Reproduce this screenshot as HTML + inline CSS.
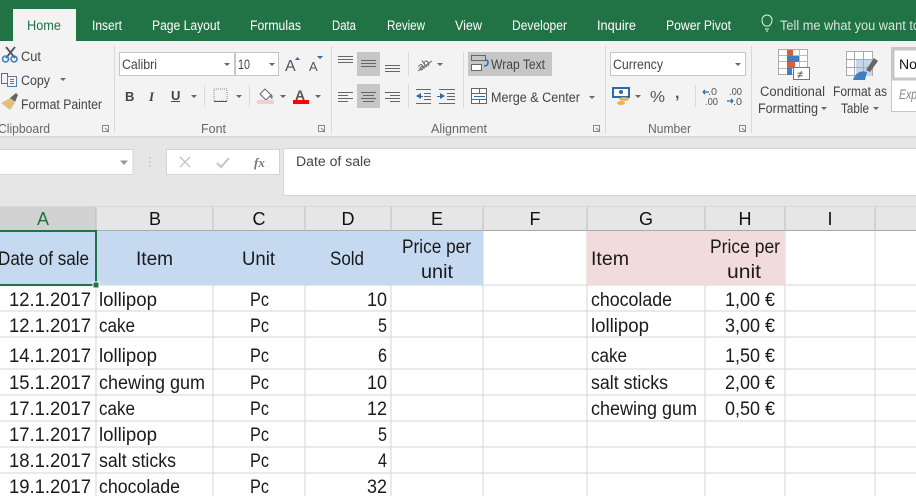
<!DOCTYPE html>
<html><head><meta charset="utf-8"><style>
html,body{margin:0;padding:0;width:916px;height:496px;overflow:hidden;background:#fff}
svg{display:block;font-family:"Liberation Sans",sans-serif}
.t{font-size:13.5px;fill:#fff}
.r{font-size:13.5px;fill:#444}
.g{font-size:13px;fill:#666}
.h{font-size:18px;fill:#111;text-anchor:middle}
.c{font-size:19px;fill:#1a1a1a}
</style></head><body>
<svg width="916" height="496" viewBox="0 0 916 496" xmlns="http://www.w3.org/2000/svg">
<rect width="916" height="41" fill="#217346"/>
<rect x="13" y="9" width="63" height="33" fill="#f3f3f3"/>
<rect y="41" width="916" height="96" fill="#f3f3f3"/>
<rect y="137" width="916" height="70" fill="#e6e6e6"/>
<rect y="136" width="916" height="2" fill="#d8d8d8"/>
<text class="t" x="27" y="30" textLength="34" lengthAdjust="spacingAndGlyphs" style="fill:#217346">Home</text>
<text class="t" x="92" y="30" textLength="30" lengthAdjust="spacingAndGlyphs">Insert</text>
<text class="t" x="152" y="30" textLength="68" lengthAdjust="spacingAndGlyphs">Page Layout</text>
<text class="t" x="250" y="30" textLength="51" lengthAdjust="spacingAndGlyphs">Formulas</text>
<text class="t" x="332" y="30" textLength="24" lengthAdjust="spacingAndGlyphs">Data</text>
<text class="t" x="387" y="30" textLength="38" lengthAdjust="spacingAndGlyphs">Review</text>
<text class="t" x="455" y="30" textLength="27" lengthAdjust="spacingAndGlyphs">View</text>
<text class="t" x="512" y="30" textLength="55" lengthAdjust="spacingAndGlyphs">Developer</text>
<text class="t" x="597" y="30" textLength="39" lengthAdjust="spacingAndGlyphs">Inquire</text>
<text class="t" x="666" y="30" textLength="65" lengthAdjust="spacingAndGlyphs">Power Pivot</text>
<text class="t" x="780" y="30" textLength="140" lengthAdjust="spacingAndGlyphs" style="fill:#d5e6dc">Tell me what you want to</text>
<g fill="none" stroke="#e8f0eb" stroke-width="1"><path d="M765 26c-2-2-3-3-3-6a5 5 0 0 1 10 0c0 3-1 4-3 6z"/><path d="M765 29h4M766 31h2"/></g>

<g fill="#d8d8d8"><rect x="114" y="46" width="1" height="87"/><rect x="331" y="46" width="1" height="87"/><rect x="605" y="46" width="1" height="87"/><rect x="751" y="46" width="1" height="87"/><rect x="408" y="52" width="1" height="24"/><rect x="408" y="84" width="1" height="24"/><rect x="463" y="52" width="1" height="56"/><rect x="204" y="85" width="1" height="22"/><rect x="249" y="85" width="1" height="22"/><rect x="695" y="85" width="1" height="22"/></g>

<!-- clipboard -->
<g fill="none" stroke="#555" stroke-width="1.8"><path d="M6 47l9 11M15 47l-9 11"/></g>
<g fill="none" stroke="#3f7fc0" stroke-width="1.6"><circle cx="5.500" cy="59" r="3"/><circle cx="14" cy="59" r="3"/></g>
<g fill="none" stroke="#666" stroke-width="1"><path d="M1.500 73.500h6v10h-6z"/><rect x="7.500" y="76.500" width="9" height="10" fill="#f3f3f3" stroke="#5a7fa5"/><path d="M10 79.500h4M10 81.500h4M10 83.500h4" stroke="#5a7fa5"/></g>
<path d="M1 103l9-5 5 5-5 7z" fill="#e3bf7e"/><path d="M10 98l6-5 2 2-3 7z" fill="#666"/>
<text class="r" x="21" y="61" textLength="20" lengthAdjust="spacingAndGlyphs">Cut</text>
<text class="r" x="21" y="85" textLength="29" lengthAdjust="spacingAndGlyphs">Copy</text>
<path d="M60 78h6l-3 3z" fill="#666"/>
<text class="r" x="21" y="109" textLength="81" lengthAdjust="spacingAndGlyphs">Format Painter</text>
<text class="g" x="-2" y="133" textLength="52" lengthAdjust="spacingAndGlyphs">Clipboard</text>
<path d="M102.500 125.500h6v6h-6zM105 128l4 4" fill="none" stroke="#888"/>

<!-- font -->
<rect x="119.500" y="52.500" width="115" height="23" fill="#fff" stroke="#c6c6c6"/>
<rect x="235.500" y="52.500" width="43" height="23" fill="#fff" stroke="#c6c6c6"/>
<text class="r" x="122" y="69" textLength="35" lengthAdjust="spacingAndGlyphs">Calibri</text>
<text class="r" x="238" y="69" textLength="12" lengthAdjust="spacingAndGlyphs">10</text>
<path d="M224 63h6l-3 3zM269 63h6l-3 3z" fill="#666"/>
<text x="285" y="71" style="font-size:16px;fill:#555">A</text><path d="M295 60h5l-2.500-3z" fill="#2b6ca8"/>
<text x="309" y="71" style="font-size:13px;fill:#555">A</text><path d="M317 56h6l-3 3z" fill="#2b6ca8"/>
<text x="125" y="101" style="font-size:13px;font-weight:bold;fill:#444">B</text>
<text x="149" y="101" style="font-size:13px;font-style:italic;font-family:'Liberation Serif',serif;font-weight:bold;fill:#444">I</text>
<text x="171" y="100" style="font-size:13px;font-weight:bold;fill:#444">U</text><rect x="171" y="101" width="9" height="1" fill="#444"/>
<path d="M191 95h6l-3 3zM236 95h6l-3 3zM280 95h6l-3 3zM315 95h6l-3 3z" fill="#666"/>
<rect x="214" y="89" width="13" height="12" fill="none" stroke="#888" stroke-dasharray="1 1"/><rect x="214" y="101" width="13" height="1" fill="#555"/>
<path d="M260 94l5-5 6 6-5 5z" fill="#fff" stroke="#666"/><path d="M271 94c2 1 2 4 1 5-2-1-2-3-1-5z" fill="#3f7fc0"/><rect x="257" y="100" width="17" height="4" fill="#f2d0ce"/>
<text x="295" y="100" style="font-size:14px;font-weight:bold;fill:#555">A</text><rect x="293" y="100" width="16" height="4" fill="#f00"/>
<text class="g" x="201" y="133" textLength="25" lengthAdjust="spacingAndGlyphs">Font</text>
<path d="M318.500 125.500h6v6h-6zM321 128l4 4" fill="none" stroke="#888"/>

<!-- alignment -->
<rect x="357" y="52" width="23" height="24" fill="#c6c6c6"/>
<rect x="357" y="84" width="23" height="24" fill="#c6c6c6"/>
<rect x="468" y="52" width="84" height="24" fill="#c6c6c6"/>
<path d="M338 56.500h15M338 59.500h15M338 62.500h15M361 60.500h15M361 63.500h15M361 66.500h15M385 65.500h15M385 68.500h15M385 71.500h15M338 92.500h15M338 95.500h10M338 98.500h15M338 101.500h10M361 92.500h15M363 95.500h11M361 98.500h15M363 101.500h11M385 92.500h15M390 95.500h10M385 98.500h15M390 101.500h10" stroke="#666" fill="none"/>
<text x="416" y="67" transform="rotate(-35 425 62)" style="font-size:11px;fill:#555">ab</text><path d="M418 71l14-10" stroke="#666" fill="none"/><path d="M437 63h6l-3 3z" fill="#666"/>
<path d="M416 89.500h15M424 93.500h7M424 96.500h7M424 99.500h7M416 103.500h15M439 89.500h16M447 93.500h8M447 96.500h8M447 99.500h8M439 103.500h16" stroke="#666" fill="none"/>
<path d="M416 96l5-3v6zM445 96l-5-3v6z" fill="#2b6ca8"/><path d="M420 96.500h3M437 96.500h4" stroke="#2b6ca8"/>
<rect x="471.500" y="55.500" width="14" height="5" fill="none" stroke="#666"/><rect x="471.500" y="64.500" width="10" height="6" fill="#fff" stroke="#666"/><path d="M486 60c3 0 3 6-2 6" stroke="#2b6ca8" fill="none" stroke-width="1.500"/>
<text class="r" x="491" y="69" textLength="54" lengthAdjust="spacingAndGlyphs">Wrap Text</text>
<rect x="471.500" y="88.500" width="15" height="15" fill="#fff" stroke="#666"/><path d="M472 93.500h15M472 99.500h15M479.500 89v4M479.500 99v4" stroke="#666" fill="none"/><path d="M474 96.500h11" stroke="#2b6ca8" fill="none"/>
<text class="r" x="491" y="102" textLength="89" lengthAdjust="spacingAndGlyphs">Merge &amp; Center</text>
<path d="M589 96h6l-3 3z" fill="#666"/>
<text class="g" x="431" y="133" textLength="56" lengthAdjust="spacingAndGlyphs">Alignment</text>
<path d="M593.500 125.500h6v6h-6zM596 128l4 4" fill="none" stroke="#888"/>

<!-- number -->
<rect x="610.500" y="52.500" width="135" height="23" fill="#fff" stroke="#c6c6c6"/>
<text class="r" x="613" y="69" textLength="50" lengthAdjust="spacingAndGlyphs">Currency</text>
<path d="M735 63h6l-3 3z" fill="#666"/>
<rect x="613" y="88" width="16" height="9" fill="#fff" stroke="#2b6ca8" stroke-width="2"/><circle cx="621" cy="92" r="2" fill="#2b6ca8"/><ellipse cx="624" cy="99" rx="5" ry="2" fill="#e6b35a"/><ellipse cx="621" cy="103" rx="4" ry="2" fill="#e6b35a"/>
<path d="M635 95h6l-3 3z" fill="#666"/>
<text x="650" y="102" textLength="15" lengthAdjust="spacingAndGlyphs" style="font-size:16px;fill:#555">%</text>
<text x="675" y="98" style="font-size:16px;font-weight:bold;fill:#555">,</text>
<text x="708" y="95" textLength="9" lengthAdjust="spacingAndGlyphs" style="font-size:10px;fill:#555">.0</text><text x="705" y="105" textLength="13" lengthAdjust="spacingAndGlyphs" style="font-size:10px;fill:#555">.00</text>
<text x="729" y="95" textLength="13" lengthAdjust="spacingAndGlyphs" style="font-size:10px;fill:#555">.00</text><text x="733" y="105" textLength="9" lengthAdjust="spacingAndGlyphs" style="font-size:10px;fill:#555">.0</text>
<path d="M703 92h6M703 92l2-2M703 92l2 2M727 101h6M733 101l-2-2M733 101l-2 2" stroke="#2b6ca8" fill="none" stroke-width="1.300"/>
<text class="g" x="648" y="133" textLength="43" lengthAdjust="spacingAndGlyphs">Number</text>
<path d="M739.500 125.500h6v6h-6zM742 128l4 4" fill="none" stroke="#888"/>

<!-- styles -->
<rect x="778.500" y="49.500" width="29" height="25" fill="#fff" stroke="#aaa"/>
<path d="M779 55.500h29M779 61.500h29M779 68.500h29M787.500 50v24M799.500 50v24" stroke="#bbb" fill="none"/>
<rect x="787" y="50" width="6" height="6" fill="#dc5f3c"/><rect x="787" y="56" width="12" height="6" fill="#3f7fc0"/><rect x="787" y="62" width="8" height="6" fill="#dc5f3c"/><rect x="787" y="68" width="5" height="7" fill="#3f7fc0"/>
<rect x="793.500" y="67.500" width="16" height="12" fill="#fff" stroke="#777"/>
<text x="797" y="78" style="font-size:11px;fill:#333">≠</text>
<rect x="846.500" y="51.500" width="26" height="24" fill="#fff" stroke="#aaa"/>
<rect x="856" y="60" width="16" height="16" fill="#c5d6ea"/>
<path d="M846 59.500h26M846 67.500h26M854.500 52v24M863.500 52v24" stroke="#aaa" fill="none"/>
<path d="M866 70l8-12 4 3-8 11z" fill="#666"/><path d="M853 80c2-7 8-10 14-8l-2 8z" fill="#3f7fc0"/>
<text class="r" x="760" y="96" textLength="65" lengthAdjust="spacingAndGlyphs">Conditional</text>
<text class="r" x="758" y="113" textLength="60" lengthAdjust="spacingAndGlyphs">Formatting</text>
<path d="M821 107h6l-3 3z" fill="#666"/>
<text class="r" x="833" y="96" textLength="54" lengthAdjust="spacingAndGlyphs">Format as</text>
<text class="r" x="841" y="113" textLength="28" lengthAdjust="spacingAndGlyphs">Table</text>
<path d="M873 107h6l-3 3z" fill="#666"/>
<rect x="891.500" y="47.500" width="30" height="64" fill="#fff" stroke="#c6c6c6"/>
<rect x="893" y="49" width="30" height="30" fill="#fff" stroke="#c6c6c6" stroke-width="3"/>
<text x="899" y="69" textLength="18" lengthAdjust="spacingAndGlyphs" style="font-size:14px;fill:#111">No</text>
<text x="899" y="99" textLength="18" lengthAdjust="spacingAndGlyphs" style="font-size:14px;font-style:italic;fill:#888">Exp</text>

<!-- formula bar -->
<rect x="-2" y="149.500" width="135" height="25" fill="#fff" stroke="#d4d4d4"/>
<path d="M120 160.500h8l-4 4.500z" fill="#999"/>
<path d="M150 157v1.500M150 161v1.500M150 165v1.500" stroke="#aaa" fill="none"/>
<rect x="166.500" y="149.500" width="113" height="25" fill="#fff" stroke="#d4d4d4"/>
<path d="M180 157l10 10M190 157l-10 10" stroke="#c6c6c6" stroke-width="1.500" fill="none"/>
<path d="M217 163l4 4 8-9" stroke="#c6c6c6" stroke-width="2" fill="none"/>
<text x="254" y="167" style="font-size:13px;font-style:italic;font-weight:bold;font-family:'Liberation Serif',serif;fill:#777">fx</text>
<rect x="283.500" y="148.500" width="640" height="47" fill="#fff" stroke="#d4d4d4"/>
<text class="r" x="296" y="166" textLength="75" lengthAdjust="spacingAndGlyphs">Date of sale</text>

<!-- column headers -->
<rect y="206" width="916" height="25" fill="#e6e6e6"/>
<rect y="207" width="96" height="24" fill="#d2d2d2"/>
<rect y="230" width="916" height="1" fill="#a9a9a9"/>
<rect y="206" width="916" height="1" fill="#d8d8d8"/>
<path d="M96 207v24M213 207v24M305 207v24M391 207v24M483 207v24M587 207v24M705 207v24M785 207v24M875 207v24" stroke="#bcbcbc" fill="none"/>
<text class="h" x="43" y="225" style="fill:#217346">A</text>
<text class="h" x="155" y="225">B</text>
<text class="h" x="259" y="225">C</text>
<text class="h" x="348" y="225">D</text>
<text class="h" x="437" y="225">E</text>
<text class="h" x="535" y="225">F</text>
<text class="h" x="646" y="225">G</text>
<text class="h" x="745" y="225">H</text>
<text class="h" x="830" y="225">I</text>

<!-- grid -->
<path d="M0 311h916M0 337h916M0 369h916M0 395h916M0 421h916M0 447h916M0 473h916M0 285h916M96 231v265M213 231v265M305 231v265M391 231v265M483 231v265M587 231v265M705 231v265M785 231v265M875 231v265" stroke="#d6d6d6" fill="none"/>
<rect y="231" width="483" height="54" fill="#c5d9f1"/>
<rect x="587" y="231" width="198" height="54" fill="#f2dcdb"/>
<rect x="-3" y="231" width="99" height="54" fill="none" stroke="#217346" stroke-width="2"/>
<rect x="93" y="282" width="6" height="6" fill="#217346" stroke="#fff"/>

<text class="c" x="-2" y="265" textLength="91" lengthAdjust="spacingAndGlyphs">Date of sale</text>
<text class="c" x="136" y="265" textLength="37" lengthAdjust="spacingAndGlyphs">Item</text>
<text class="c" x="242" y="265" textLength="33" lengthAdjust="spacingAndGlyphs">Unit</text>
<text class="c" x="330" y="265" textLength="34" lengthAdjust="spacingAndGlyphs">Sold</text>
<text class="c" x="402" y="253" textLength="69" lengthAdjust="spacingAndGlyphs">Price per</text>
<text class="c" x="421" y="278" textLength="32" lengthAdjust="spacingAndGlyphs">unit</text>
<text class="c" x="591" y="265" textLength="38" lengthAdjust="spacingAndGlyphs">Item</text>
<text class="c" x="710" y="253" textLength="70" lengthAdjust="spacingAndGlyphs">Price per</text>
<text class="c" x="727" y="278" textLength="34" lengthAdjust="spacingAndGlyphs">unit</text>

<text class="c" x="9" y="306" textLength="82" lengthAdjust="spacingAndGlyphs">12.1.2017</text>
<text class="c" x="99" y="306" textLength="58" lengthAdjust="spacingAndGlyphs">lollipop</text>
<text class="c" x="250" y="306" textLength="19" lengthAdjust="spacingAndGlyphs">Pc</text>
<text class="c" x="367" y="306" textLength="20" lengthAdjust="spacingAndGlyphs">10</text>

<text class="c" x="9" y="332" textLength="82" lengthAdjust="spacingAndGlyphs">12.1.2017</text>
<text class="c" x="99" y="332" textLength="36" lengthAdjust="spacingAndGlyphs">cake</text>
<text class="c" x="250" y="332" textLength="19" lengthAdjust="spacingAndGlyphs">Pc</text>
<text class="c" x="378" y="332" textLength="9" lengthAdjust="spacingAndGlyphs">5</text>

<text class="c" x="9" y="362" textLength="82" lengthAdjust="spacingAndGlyphs">14.1.2017</text>
<text class="c" x="99" y="362" textLength="58" lengthAdjust="spacingAndGlyphs">lollipop</text>
<text class="c" x="250" y="362" textLength="19" lengthAdjust="spacingAndGlyphs">Pc</text>
<text class="c" x="378" y="362" textLength="9" lengthAdjust="spacingAndGlyphs">6</text>

<text class="c" x="9" y="389" textLength="82" lengthAdjust="spacingAndGlyphs">15.1.2017</text>
<text class="c" x="99" y="389" textLength="106" lengthAdjust="spacingAndGlyphs">chewing gum</text>
<text class="c" x="250" y="389" textLength="19" lengthAdjust="spacingAndGlyphs">Pc</text>
<text class="c" x="367" y="389" textLength="20" lengthAdjust="spacingAndGlyphs">10</text>

<text class="c" x="9" y="415" textLength="82" lengthAdjust="spacingAndGlyphs">17.1.2017</text>
<text class="c" x="99" y="415" textLength="36" lengthAdjust="spacingAndGlyphs">cake</text>
<text class="c" x="250" y="415" textLength="19" lengthAdjust="spacingAndGlyphs">Pc</text>
<text class="c" x="367" y="415" textLength="20" lengthAdjust="spacingAndGlyphs">12</text>

<text class="c" x="9" y="441" textLength="82" lengthAdjust="spacingAndGlyphs">17.1.2017</text>
<text class="c" x="99" y="441" textLength="58" lengthAdjust="spacingAndGlyphs">lollipop</text>
<text class="c" x="250" y="441" textLength="19" lengthAdjust="spacingAndGlyphs">Pc</text>
<text class="c" x="378" y="441" textLength="9" lengthAdjust="spacingAndGlyphs">5</text>

<text class="c" x="9" y="467" textLength="82" lengthAdjust="spacingAndGlyphs">18.1.2017</text>
<text class="c" x="99" y="467" textLength="77" lengthAdjust="spacingAndGlyphs">salt sticks</text>
<text class="c" x="250" y="467" textLength="19" lengthAdjust="spacingAndGlyphs">Pc</text>
<text class="c" x="378" y="467" textLength="9" lengthAdjust="spacingAndGlyphs">4</text>

<text class="c" x="9" y="493" textLength="82" lengthAdjust="spacingAndGlyphs">19.1.2017</text>
<text class="c" x="99" y="493" textLength="81" lengthAdjust="spacingAndGlyphs">chocolade</text>
<text class="c" x="250" y="493" textLength="19" lengthAdjust="spacingAndGlyphs">Pc</text>
<text class="c" x="367" y="493" textLength="20" lengthAdjust="spacingAndGlyphs">32</text>

<text class="c" x="591" y="306" textLength="81" lengthAdjust="spacingAndGlyphs">chocolade</text>
<text class="c" x="725" y="306" textLength="50" lengthAdjust="spacingAndGlyphs">1,00 €</text>
<text class="c" x="591" y="332" textLength="58" lengthAdjust="spacingAndGlyphs">lollipop</text>
<text class="c" x="725" y="332" textLength="50" lengthAdjust="spacingAndGlyphs">3,00 €</text>
<text class="c" x="591" y="362" textLength="36" lengthAdjust="spacingAndGlyphs">cake</text>
<text class="c" x="725" y="362" textLength="50" lengthAdjust="spacingAndGlyphs">1,50 €</text>
<text class="c" x="591" y="389" textLength="77" lengthAdjust="spacingAndGlyphs">salt sticks</text>
<text class="c" x="725" y="389" textLength="50" lengthAdjust="spacingAndGlyphs">2,00 €</text>
<text class="c" x="591" y="415" textLength="106" lengthAdjust="spacingAndGlyphs">chewing gum</text>
<text class="c" x="725" y="415" textLength="50" lengthAdjust="spacingAndGlyphs">0,50 €</text>
</svg>
</body></html>
